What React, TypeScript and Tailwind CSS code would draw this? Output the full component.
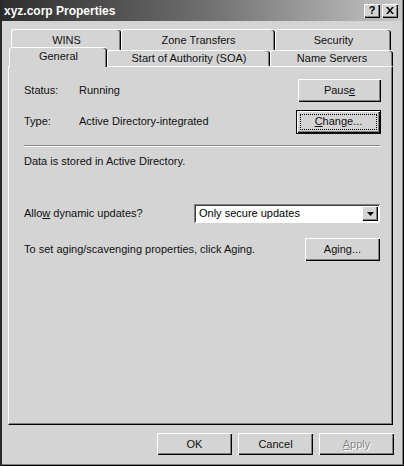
import type { ReactNode } from 'react';

const raised =
  'shadow-[inset_1px_1px_0_#ffffff,inset_-1px_-1px_0_#000000,inset_-2px_-2px_0_#808080]';

function Button({
  children,
  className = '',
  isDefault = false,
  disabled = false,
}: {
  children: ReactNode;
  className?: string;
  isDefault?: boolean;
  disabled?: boolean;
}) {
  if (isDefault) {
    return (
      <div className={`border border-black bg-[#d4d4d4] ${className}`}>
        <div className={`flex h-full w-full items-center justify-center p-[3px] ${raised}`}>
          <div className="flex h-full w-full items-center justify-center border border-dotted border-black">
            {children}
          </div>
        </div>
      </div>
    );
  }
  return (
    <div
      className={`flex items-center justify-center bg-[#d4d4d4] ${raised} ${className} ${
        disabled ? 'text-[#8a8a8a] [text-shadow:1px_1px_0_#ffffff]' : ''
      }`}
    >
      {children}
    </div>
  );
}

function Tab({ label, className = '' }: { label: string; className?: string }) {
  return (
    <div
      className={`flex items-center justify-center rounded-t-[3px] border-l border-t border-white bg-[#d4d4d4] shadow-[inset_-1px_0_0_#000000,inset_-2px_0_0_#808080] ${className}`}
    >
      {label}
    </div>
  );
}

export default function App() {
  return (
    <div className="flex h-[466px] w-[404px] flex-col bg-[#d4d4d4] px-[2px] pb-[2px] font-['Liberation_Sans',Arial,sans-serif] text-[11px] text-[#111111] shadow-[inset_2px_0_0_#2a2a2a,inset_-1px_-1px_0_#000000,inset_-2px_-2px_0_#808080]">
      {/* title bar */}
      <div className="flex h-[21px] shrink-0 items-center justify-between bg-gradient-to-r from-[#2e2e2e] via-[#6e6e6e] to-[#c6c6c6] pl-[2px] pr-[4px]">
        <span className="text-[12px] font-bold text-white">xyz.corp Properties</span>
        <div className="flex gap-[2px]">
          <div className={`flex h-[14px] w-[16px] items-center justify-center bg-[#d4d4d4] text-[11px] font-bold leading-none text-black ${raised}`}>
            ?
          </div>
          <div className={`flex h-[14px] w-[16px] items-center justify-center bg-[#d4d4d4] ${raised}`}>
            <svg width="8" height="7" viewBox="0 0 8 7">
              <path d="M0 0h2l2 2.5L6 0h2L5 3.5 8 7H6L4 4.5 2 7H0l3-3.5z" fill="#000" />
            </svg>
          </div>
        </div>
      </div>

      {/* tabs */}
      <div className="ml-[9px] mt-[8px] flex h-[21px] shrink-0 items-start pb-[4px]">
        <Tab label="WINS" className="h-[21px] w-[110px]" />
        <Tab label="Zone Transfers" className="h-[21px] w-[154px]" />
        <Tab label="Security" className="h-[21px] w-[116px]" />
      </div>
      <div className="ml-[7px] flex h-[16px] shrink-0 items-start">
        <Tab label="General" className="relative z-10 -mt-[3px] h-[20px] w-[98px] pb-[3px]" />
        <Tab label="Start of Authority (SOA)" className="h-[16px] w-[163px]" />
        <Tab label="Name Servers" className="h-[16px] w-[123px]" />
      </div>

      {/* panel */}
      <div className="ml-[6px] flex h-[359px] w-[385px] shrink-0 flex-col border border-b-black border-l-white border-r-black border-t-white pl-[15px] pr-[11px] pt-[12px] shadow-[inset_-1px_-1px_0_#808080]">
        <div className="flex h-[23px] items-center">
          <span className="w-[55px]">Status:</span>
          <span className="flex-1">Running</span>
          <Button className="h-[23px] w-[83px]">
            Paus<span className="underline">e</span>
          </Button>
        </div>
        <div className="mt-[8px] flex h-[23px] items-center">
          <span className="w-[55px]">Type:</span>
          <span className="flex-1">Active Directory-integrated</span>
          <Button isDefault className="h-[24px] w-[85px]">
            <span>
              <span className="underline">C</span>hange...
            </span>
          </Button>
        </div>
        <div className="mr-[1px] mt-[12px] h-[2px] border-b border-t border-b-white border-t-[#8a8a8a]" />
        <div className="mt-[7px] leading-[14px]">Data is stored in Active Directory.</div>

        <div className="mt-[36px] flex h-[19px] items-center">
          <span className="w-[170px]">
            Allo<span className="underline">w</span> dynamic updates?
          </span>
          <div className="flex h-[19px] w-[186px] items-center bg-white shadow-[inset_1px_1px_0_#808080,inset_-1px_-1px_0_#ffffff,inset_2px_2px_0_#404040]">
            <span className="flex-1 pl-[5px] text-black">Only secure updates</span>
            <div className={`mr-[2px] flex h-[15px] w-[16px] items-center justify-center bg-[#d4d4d4] ${raised}`}>
              <svg width="7" height="4" viewBox="0 0 7 4">
                <path d="M0 0h7L3.5 4z" fill="#000" />
              </svg>
            </div>
          </div>
        </div>

        <div className="mt-[15px] flex h-[23px] items-center">
          <span className="flex-1">To set aging/scavenging properties, click Aging.</span>
          <Button className="mr-[1px] h-[23px] w-[75px]">Aging...</Button>
        </div>
      </div>

      {/* dialog buttons */}
      <div className="mt-[8px] flex shrink-0 justify-end gap-[6px] pr-[8px]">
        <Button className="h-[22px] w-[75px]">OK</Button>
        <Button className="h-[22px] w-[75px]">Cancel</Button>
        <Button disabled className="h-[22px] w-[75px]">
          <span>
            <span className="underline">A</span>pply
          </span>
        </Button>
      </div>
    </div>
  );
}
